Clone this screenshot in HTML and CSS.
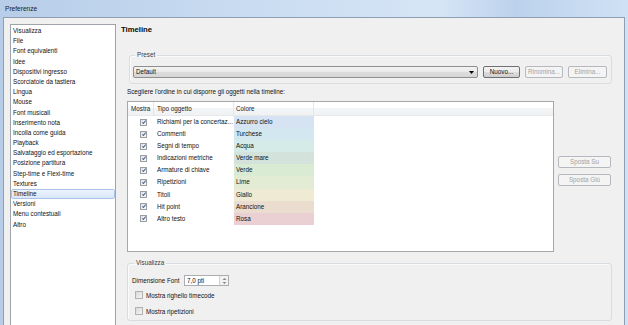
FILE: index.html
```html
<!DOCTYPE html>
<html>

<head>
    <meta charset="UTF-8">
    <title>Preferenze</title>
    <link rel="stylesheet" href="styles.css">
</head>

<body>
    <div class="window">
        <div class="titlebar">Preferenze</div>

        <div class="client">
            <ul class="nav">
                <li>Visualizza</li>
                <li>File</li>
                <li>Font equivalenti</li>
                <li>Idee</li>
                <li>Dispositivi ingresso</li>
                <li>Scorciatoie da tastiera</li>
                <li>Lingua</li>
                <li>Mouse</li>
                <li>Font musicali</li>
                <li>Inserimento nota</li>
                <li>Incolla come guida</li>
                <li>Playback</li>
                <li>Salvataggio ed esportazione</li>
                <li>Posizione partitura</li>
                <li>Step-time e Flexi-time</li>
                <li>Textures</li>
                <li class="selected">Timeline</li>
                <li>Versioni</li>
                <li>Menu contestuali</li>
                <li>Altro</li>
            </ul>

            <div class="pane">
                <h1 class="pane-title">Timeline</h1>

                <div class="pane-body">
                    <fieldset class="group preset">
                        <legend>Preset</legend>
                        <div class="preset-row">
                            <div class="combo">
                                <span>Default</span>
                                <svg class="combo-arrow" width="5" height="3" viewBox="0 0 5 3">
                                    <polygon points="0 0 5 0 2.5 3" fill="#000"></polygon>
                                </svg>
                            </div>
                            <button class="btn btn-new">Nuovo...</button>
                            <button class="btn btn-rename" disabled>Rinomina...</button>
                            <button class="btn btn-delete" disabled>Elimina...</button>
                        </div>
                    </fieldset>

                    <p class="hint">Scegliere l'ordine in cui disporre gli oggetti nella timeline:</p>

                    <div class="order">
                        <div class="grid">
                            <div class="grid-head">
                                <span class="col-show">Mostra</span>
                                <span class="col-type">Tipo oggetto</span>
                                <span class="col-color">Colore</span>
                                <span class="col-rest"></span>
                            </div>

                            <div class="grid-row">
                                <span class="col-show"><i class="check"></i></span>
                                <span class="col-type">Richiami per la concertaz...</span>
                                <span class="col-color c-sky">Azzurro cielo</span>
                            </div>
                            <div class="grid-row">
                                <span class="col-show"><i class="check"></i></span>
                                <span class="col-type">Commenti</span>
                                <span class="col-color c-turq">Turchese</span>
                            </div>
                            <div class="grid-row">
                                <span class="col-show"><i class="check"></i></span>
                                <span class="col-type">Segni di tempo</span>
                                <span class="col-color c-aqua">Acqua</span>
                            </div>
                            <div class="grid-row">
                                <span class="col-show"><i class="check"></i></span>
                                <span class="col-type">Indicazioni metriche</span>
                                <span class="col-color c-sea">Verde mare</span>
                            </div>
                            <div class="grid-row">
                                <span class="col-show"><i class="check"></i></span>
                                <span class="col-type">Armature di chiave</span>
                                <span class="col-color c-green">Verde</span>
                            </div>
                            <div class="grid-row">
                                <span class="col-show"><i class="check"></i></span>
                                <span class="col-type">Ripetizioni</span>
                                <span class="col-color c-lime">Lime</span>
                            </div>
                            <div class="grid-row">
                                <span class="col-show"><i class="check"></i></span>
                                <span class="col-type">Titoli</span>
                                <span class="col-color c-yellow">Giallo</span>
                            </div>
                            <div class="grid-row">
                                <span class="col-show"><i class="check"></i></span>
                                <span class="col-type">Hit point</span>
                                <span class="col-color c-orange">Arancione</span>
                            </div>
                            <div class="grid-row">
                                <span class="col-show"><i class="check"></i></span>
                                <span class="col-type">Altro testo</span>
                                <span class="col-color c-pink">Rosa</span>
                            </div>
                        </div>

                        <div class="side-buttons">
                            <button class="btn" disabled>Sposta Su</button>
                            <button class="btn" disabled>Sposta Giù</button>
                        </div>
                    </div>

                    <fieldset class="group view">
                        <legend>Visualizza</legend>
                        <div class="field-row">
                            <span class="field-label">Dimensione Font</span>
                            <div class="spin">
                                <span class="spin-value">7,0 pti</span>
                                <span class="spin-arrows">
                                    <svg width="5" height="8" viewBox="0 0 5 8">
                                        <polygon points="2.5 1 4.5 3 0.5 3" fill="#8a8a8a"></polygon>
                                        <polygon points="0.5 5 4.5 5 2.5 7" fill="#8a8a8a"></polygon>
                                    </svg>
                                </span>
                            </div>
                        </div>
                        <label class="option"><i class="box"></i>Mostra righello timecode</label>
                        <label class="option"><i class="box"></i>Mostra ripetizioni</label>
                    </fieldset>
                </div>
            </div>
        </div>
    </div>
</body>

</html>
```

FILE: styles.css
```css
html,
body {
    margin: 0;
    padding: 0;
    height: 100%;
    overflow: hidden;
}

body {
    font-family: "Liberation Sans", Arial, sans-serif;
    font-size: 6.3px;
    color: #111;
    background: #c3d7ee;
}

/* window frame */

.window {
    height: 100%;
    box-sizing: border-box;
    display: flex;
    flex-direction: column;
    padding: 0 3px;
    background: linear-gradient(to right, #b7cde8 0%, #c9dcf1 40%, #d6e5f6 70%, #bcd2ec 82%, #cfe1f4 100%);
}

.titlebar {
    height: 17px;
    line-height: 18px;
    padding-left: 2px;
    font-size: 6.6px;
    color: #1a1a1a;
}

.client {
    flex-grow: 1;
    min-height: 0;
    display: flex;
    background: #f0f0f0;
    border: 1px solid #8e9fb3;
    border-bottom: none;
}

/* left category list */

.nav {
    list-style: none;
    margin: 6px 0 0 6px;
    padding: 1px 0 0 0;
    width: 104px;
    background: #fff;
    border: 1px solid #9ea4aa;
    border-bottom: none;
    flex-shrink: 0;
}

.nav li {
    height: 10.2px;
    line-height: 10.2px;
    padding-left: 2px;
    white-space: nowrap;
}

.nav li.selected {
    padding-left: 1px;
    background: linear-gradient(#eef4fc, #d9e7f8);
    border: 1px solid #a9c4e6;
    border-radius: 2px;
    line-height: 8.2px;
    height: 8.2px;
}

/* right pane */

.pane {
    flex-grow: 1;
    padding: 6px 12px 0 5px;
}

.pane-title {
    margin: 0;
    font-size: 7.7px;
    line-height: 12px;
    font-weight: bold;
    color: #0a0a0a;
}

.pane-body {
    padding-left: 6px;
}

.group {
    margin: 0;
    padding: 0;
    border: 1px solid #d8dde2;
    border-radius: 3px;
    box-shadow: inset 1px 1px 0 #fbfbfb;
}

.group legend {
    line-height: 8px;
    padding: 0 2px;
    margin-left: 2px;
    color: #3a3a3a;
}

.preset {
    margin: 15px 0 0 2px;
    padding: 7px 4px 5px 3px;
}

.preset-row {
    display: flex;
    gap: 5px;
}

.combo {
    flex-grow: 1;
    height: 10px;
    line-height: 10px;
    padding: 0 3px 0 2px;
    border: 1px solid #8f8f8f;
    border-radius: 2px;
    background: linear-gradient(#f4f4f4, #e9e9e9 50%, #dcdcdc 51%, #d6d6d6);
    display: flex;
    align-items: center;
    justify-content: space-between;
}

.btn {
    font-family: inherit;
    font-size: 6.3px;
    height: 12px;
    padding: 0;
    line-height: 10px;
    border: 1px solid #707070;
    border-radius: 2px;
    color: #111;
    background: linear-gradient(#f3f3f3, #ebebeb 50%, #dddddd 51%, #cfcfcf);
}

.btn:disabled {
    color: #a3a3a3;
    border-color: #b5b9bd;
    background: #f4f4f4;
}

.btn-new {
    width: 37px;
}

.btn-rename {
    width: 38px;
}

.btn-delete {
    width: 39px;
}

.hint {
    margin: 4px 0 0 0;
    line-height: 8px;
    color: #111;
}

/* ordering grid */

.order {
    display: flex;
    gap: 4px;
    margin-top: 5px;
}

.grid {
    width: 427px;
    height: 151px;
    box-sizing: border-box;
    background: #fff;
    border: 1px solid #a7a7a7;
}

.grid-head {
    display: flex;
    height: 14px;
    line-height: 13px;
    background: linear-gradient(#fff 0%, #fff 45%, #f3f4f6 50%, #f1f2f4 100%);
    border-bottom: 1px solid #e6e8eb;
    box-sizing: border-box;
}

.grid-head span {
    border-right: 1px solid #e3e6ea;
    color: #222;
}

.grid-head .col-rest {
    flex-grow: 1;
    border-right: none;
}

.col-show {
    width: 26px;
    padding-left: 3px;
    box-sizing: border-box;
}

.col-type {
    width: 80px;
    padding-left: 3px;
    box-sizing: border-box;
    white-space: nowrap;
}

.col-color {
    width: 80px;
    padding-left: 2px;
    box-sizing: border-box;
}

.grid-row {
    display: flex;
    height: 12.1px;
    line-height: 12.1px;
}

.grid-row .col-show {
    padding-left: 12px;
    display: flex;
    align-items: center;
}

.check {
    display: block;
    width: 5px;
    height: 5px;
    border: 1px solid #9a9ea3;
    background: linear-gradient(135deg, #dfe3e8, #f8f9fa);
    position: relative;
}

.check::after {
    content: "";
    position: absolute;
    left: 1.5px;
    top: 0;
    width: 1.4px;
    height: 3px;
    border: solid #4a6089;
    border-width: 0 1px 1px 0;
    transform: rotate(40deg);
}

.c-sky { background: #d5e3f3; }
.c-turq { background: #d2e7f0; }
.c-aqua { background: #d4ebe7; }
.c-sea { background: #d3e3dc; }
.c-green { background: #d9ebd3; }
.c-lime { background: #e2ebd3; }
.c-yellow { background: #eeead4; }
.c-orange { background: #ebdcd0; }
.c-pink { background: #eacfd3; }

.side-buttons {
    display: flex;
    flex-direction: column;
    gap: 6px;
    padding-top: 55px;
}

.side-buttons .btn {
    width: 53px;
}

/* display options */

.view {
    margin-top: 7px;
    padding: 8px 4px 3px 4px;
}

.field-row {
    display: flex;
    align-items: center;
    gap: 4px;
    height: 11px;
}

.field-label {
    width: 48px;
    white-space: nowrap;
}

.spin {
    width: 41px;
    height: 9px;
    border: 1px solid #abadb3;
    background: #fff;
    display: flex;
    justify-content: space-between;
    align-items: center;
    padding-left: 2px;
}

.spin-arrows {
    width: 8px;
    height: 9px;
    display: flex;
    align-items: center;
    justify-content: center;
    background: #f2f2f2;
    border-left: 1px solid #d2d2d2;
}

.option {
    display: flex;
    align-items: center;
    gap: 3px;
    height: 12px;
    margin-top: 3px;
    padding-left: 3px;
}

.option + .option {
    margin-top: 4px;
}

.box {
    display: block;
    width: 6px;
    height: 6px;
    border: 1px solid #b2b2b2;
    background: linear-gradient(135deg, #d9d9d9, #f4f4f4);
}
```
